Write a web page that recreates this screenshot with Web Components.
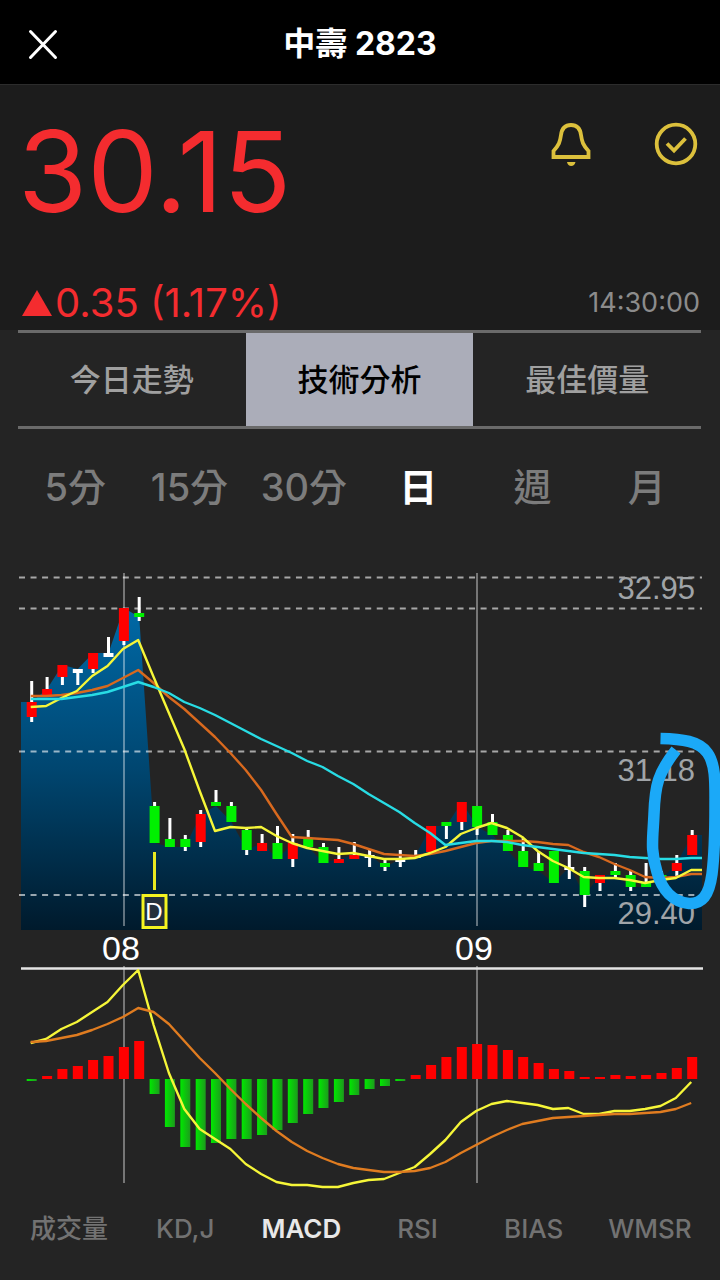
<!DOCTYPE html>
<html lang="zh-Hant">
<head>
<meta charset="utf-8">
<meta name="viewport" content="width=device-width, initial-scale=1">
<title>中壽 2823</title>
<style>
  body {
    margin: 0;
    min-height: 100vh;
    background: #242424;
    color: #fff;
    font-family: Inter, "Noto Sans CJK TC", sans-serif;
  }
</style>
</head>
<body>
<stock-page></stock-page>

<script>
class StockHeader extends HTMLElement {
  constructor() {
    super();
    this.attachShadow({ mode: 'open' });
  }

  connectedCallback() {
    this.shadowRoot.innerHTML = `
      <style>
        :host {
          display: grid;
          grid-template-columns: 88px 1fr 88px;
          align-items: center;
          box-sizing: border-box;
          height: 85px;
          padding-top: 3px;
          background: #000;
          border-bottom: 1px solid #2c2c2c;
        }
        button {
          width: 44px;
          height: 44px;
          margin-left: 21px;
          padding: 0;
          border: 0;
          background: transparent;
          color: #fff;
          cursor: pointer;
        }
        svg { display: block; }
        h1 {
          margin: 0;
          text-align: center;
          font-size: 32px;
          line-height: 40px;
          font-weight: 700;
        }
      </style>
      <button aria-label="關閉">
        <svg width="44" height="44" viewBox="0 0 44 44" fill="none" stroke="currentColor" stroke-width="3" stroke-linecap="round">
          <path d="M9.500 9.500L34.500 35.500M34.500 9.500L9.500 35.500"/>
        </svg>
      </button>
      <h1><slot></slot></h1>
    `;
  }
}
customElements.define('stock-header', StockHeader);

class StockQuote extends HTMLElement {
  constructor() {
    super();
    this.attachShadow({ mode: 'open' });
  }

  connectedCallback() {
    const price = this.getAttribute('price');
    const change = this.getAttribute('change');
    const time = this.getAttribute('time');
    this.shadowRoot.innerHTML = `
      <style>
        :host {
          display: flex;
          flex-direction: column;
          justify-content: space-between;
          box-sizing: border-box;
          height: 245px;
          padding: 24px 20px 3px 18px;
          background: #1c1c1c;
        }
        .row {
          display: flex;
          justify-content: space-between;
        }
        .price {
          color: #f42c2f;
          font-size: 112px;
          line-height: 124px;
          font-weight: 400;
        }
        .actions {
          display: flex;
          gap: 57px;
          padding-top: 11px;
        }
        button {
          width: 48px;
          height: 48px;
          padding: 0;
          border: 0;
          background: transparent;
          color: #dcc03c;
          cursor: pointer;
        }
        svg { display: block; }
        .bottom {
          align-items: center;
          padding-left: 4px;
        }
        .change {
          display: flex;
          align-items: center;
          gap: 3px;
          color: #f42c2f;
          font-size: 40px;
          line-height: 48px;
        }
        time {
          color: #8c8c8c;
          font-size: 27px;
          line-height: 32px;
        }
      </style>
      <div class="row">
        <div class="price">${price}</div>
        <div class="actions">
          <button aria-label="到價提醒">
            <svg width="48" height="48" viewBox="0 0 48 48" fill="none" stroke="currentColor" stroke-width="3.800">
              <path d="M6.500 37V31C12 25 13 22 14 15C15 7 19 5 24 5S33 7 34 15C35 22 36 25 41.500 31V37Z"/>
              <path d="M20 42H28.500Q27.500 46 24.200 46T20 42Z" fill="currentColor" stroke="none"/>
            </svg>
          </button>
          <button aria-label="已加入自選">
            <svg width="48" height="48" viewBox="0 0 48 48" fill="none" stroke="currentColor" stroke-width="3.800">
              <circle cx="24" cy="24" r="19.300"/>
              <path d="M15 23.500L22 30.500L33.500 18.500"/>
            </svg>
          </button>
        </div>
      </div>
      <div class="row bottom">
        <div class="change">
          <svg width="30" height="26" viewBox="0 0 30 26"><path d="M15 0L30 26H0Z" fill="currentColor"/></svg>
          <span>${change}</span>
        </div>
        <time>${time}</time>
      </div>
    `;
  }
}
customElements.define('stock-quote', StockQuote);

// Framed tabs under the quote
class ViewTabs extends HTMLElement {
  constructor() {
    super();
    this.attachShadow({ mode: 'open' });
  }

  connectedCallback() {
    const items = this.getAttribute('items').split('|');
    const active = this.getAttribute('active');
    this.shadowRoot.innerHTML = `
      <style>
        :host {
          display: grid;
          grid-template-columns: repeat(3, 1fr);
          height: 93px;
          margin: 0 19px 0 18px;
          border-top: 3px solid #6a6a6a;
          border-bottom: 3px solid #6a6a6a;
        }
        button {
          padding: 0;
          border: 0;
          background: transparent;
          color: #a0a0a0;
          font: 500 31px/40px Inter, "Noto Sans CJK TC", sans-serif;
          cursor: pointer;
        }
        button[aria-pressed="true"] {
          background: #abadb9;
          color: #000;
        }
      </style>
      ${items.map(t => `<button aria-pressed="${t === active}">${t}</button>`).join('')}
    `;
  }
}
customElements.define('view-tabs', ViewTabs);

// Plain row of choices, used for the period and for the indicator
class ChoiceRow extends HTMLElement {
  constructor() {
    super();
    this.attachShadow({ mode: 'open' });
  }

  connectedCallback() {
    const items = this.getAttribute('items').split('|');
    const active = this.getAttribute('active');
    this.shadowRoot.innerHTML = `
      <style>
        :host {
          display: grid;
          grid-template-columns: repeat(6, 1fr);
          --size: 38px;
          --color: #7c7c7c;
        }
        button {
          padding: 0;
          border: 0;
          background: transparent;
          color: var(--color);
          font-family: Inter, "Noto Sans CJK TC", sans-serif;
          font-size: var(--size);
          font-weight: 500;
          line-height: 48px;
          white-space: nowrap;
          cursor: pointer;
        }
        button[aria-pressed="true"] {
          color: var(--active, #fff);
          font-weight: var(--active-weight, 700);
        }
      </style>
      ${items.map(t => `<button aria-pressed="${t === active}">${t}</button>`).join('')}
    `;
  }
}
customElements.define('choice-row', ChoiceRow);

// Candle: [colour, body top, body bottom, wick top, wick bottom]
const CANDLES = [
  ['r', 702, 717, 681, 722], ['r', 689, 697, 677, 697], ['r', 665, 677, 665, 685], ['w', 669, 673, 669, 685],
  ['r', 653, 669, 653, 673], ['w', 653, 657, 637, 657], ['r', 608, 641, 608, 645], ['g', 613, 617, 597, 621],
  ['g', 806, 843, 802, 843], ['g', 839, 847, 818, 847], ['g', 839, 847, 835, 851], ['r', 814, 842, 810, 847],
  ['g', 802, 806, 790, 806], ['g', 806, 822, 802, 822], ['g', 830, 850, 827, 855], ['r', 843, 851, 834, 851],
  ['g', 843, 859, 826, 859], ['r', 843, 859, 834, 867], ['g', 839, 847, 830, 847], ['g', 847, 863, 843, 863],
  ['r', 859, 863, 847, 863], ['r', 855, 859, 842, 859], ['w', 855, 858, 850, 867], ['g', 863, 867, 859, 871],
  ['w', 859, 862, 850, 867], ['w', 855, 858, 850, 858], ['r', 826, 852, 826, 852], ['g', 822, 826, 822, 839],
  ['r', 802, 822, 802, 830], ['g', 806, 827, 806, 835], ['g', 822, 835, 814, 835], ['g', 835, 851, 830, 851],
  ['g', 851, 867, 838, 867], ['g', 863, 871, 851, 871], ['g', 851, 883, 851, 883], ['w', 867, 870, 855, 879],
  ['g', 871, 895, 867, 907], ['r', 875, 883, 875, 891], ['g', 871, 875, 863, 879], ['g', 875, 887, 871, 891],
  ['g', 883, 887, 863, 887], ['g', 875, 879, 871, 883], ['r', 863, 871, 855, 877], ['r', 835, 855, 830, 855]
];

const MA5 = [707, 706, 698, 691, 676, 666, 649, 640, 677, 713, 749, 791, 831, 827, 828, 827, 836, 843, 848, 851, 854, 853,
  856, 859, 859, 858, 853, 847, 834, 828, 823, 828, 837, 851, 861, 868, 877, 878, 878, 880, 883, 880, 878, 870];
const MA10 = [696, 696, 695, 693, 690, 686, 678, 670, 683, 697, 709, 723, 737, 753, 770, 790, 814, 837, 838, 839, 840, 844,
  849, 854, 855, 856, 854, 851, 847, 843, 841, 841, 841, 842, 844, 845, 852, 857, 864, 870, 877, 878, 877, 874];
const MA20 = [699, 699, 699, 697, 695, 692, 687, 682, 687, 693, 702, 708, 715, 723, 731, 739, 746, 753, 761, 767, 776, 784,
  794, 803, 812, 823, 833, 845, 843, 841, 841, 842, 845, 847, 849, 851, 853, 854, 855, 857, 858, 859, 859, 858];

const OSC = [-2, 3, 10, 13, 19, 23, 32, 38, -15, -48, -68, -71, -64, -60, -60, -56, -51, -44, -35, -29, -23, -16,
  -10, -7, -2, 4, 14, 22, 32, 35, 34, 29, 22, 16, 10, 8, 2, 2, 4, 3, 4, 6, 11, 22];
const DIF = [1043, 1039, 1029, 1022, 1012, 1002, 985, 970, 1025, 1073, 1109, 1129, 1139, 1149, 1164, 1174, 1182, 1185, 1185,
  1187, 1187, 1183, 1180, 1179, 1173, 1167, 1154, 1140, 1122, 1111, 1104, 1101, 1103, 1105, 1109, 1108, 1114, 1114, 1111,
  1111, 1109, 1106, 1098, 1082];
const SIGNAL = [1042, 1041, 1038, 1035, 1030, 1024, 1017, 1008, 1012, 1024, 1041, 1058, 1073, 1089, 1104, 1118, 1131, 1142,
  1151, 1158, 1164, 1168, 1170, 1172, 1172, 1171, 1168, 1162, 1153, 1145, 1137, 1130, 1124, 1121, 1118, 1117, 1116, 1115,
  1114, 1114, 1113, 1112, 1109, 1103];

const FILL = { r: '#ff0000', g: '#00f000', w: '#ffffff' };
const STEP = 15.36;
const BASE = 1079;

class StockChart extends HTMLElement {
  constructor() {
    super();
    this.attachShadow({ mode: 'open' });
  }

  connectedCallback() {
    this.render();
  }

  x(i) {
    return Math.round((31.7 + i * STEP) * 10) / 10;
  }

  line(values, color, tail) {
    const points = values.map((v, i) => `${this.x(i) - 1},${v}`);
    if (tail) points.push(`702,${values[values.length - 1]}`);
    return `<polyline points="${points.join(' ')}" stroke="${color}"/>`;
  }

  candle([c, top, bottom, high, low], i) {
    const x = this.x(i);
    return `<rect x="${x - 1.5}" y="${high}" width="3" height="${low - high}" fill="#fff"/>
      <rect x="${x - 5}" y="${top}" width="10" height="${bottom - top}" fill="${FILL[c]}"/>`;
  }

  bar(v, i) {
    const x = this.x(i) - 5;
    return v > 0
      ? `<rect x="${x}" y="${BASE - v}" width="10" height="${v}" fill="#ff0000"/>`
      : `<rect x="${x}" y="${BASE}" width="10" height="${-v}" fill="url(#down)"/>`;
  }

  render() {
    const closes = CANDLES.map(([c, top, bottom], i) => `L${this.x(i)} ${c === 'g' ? bottom : top}`).join('');
    this.shadowRoot.innerHTML = `
      <style>
        :host { display: block; }
        svg {
          display: block;
          width: 100%;
          height: auto;
        }
        text { font-family: "Liberation Sans", Arial, sans-serif; }
        .scale { fill: #a0a4a8; font-size: 31px; text-anchor: end; }
        .month { fill: #fff; font-size: 34px; text-anchor: middle; }
        .mark { fill: #fff; font-size: 24px; text-anchor: middle; }
      </style>
      <svg viewBox="0 540 720 660" role="img" aria-label="日線與 MACD">
        <defs>
          <linearGradient id="area" gradientUnits="userSpaceOnUse" x1="0" y1="608" x2="0" y2="930">
            <stop offset="0" stop-color="#0069a6"/>
            <stop offset=".5" stop-color="#004670"/>
            <stop offset="1" stop-color="#001a2c"/>
          </linearGradient>
          <linearGradient id="down">
            <stop offset="0" stop-color="#00e800"/>
            <stop offset="1" stop-color="#1c9c1c"/>
          </linearGradient>
        </defs>

        <path d="M21 930V702${closes}H702V930Z" fill="url(#area)"/>
        <g stroke="#fff" stroke-opacity=".6" stroke-width="2" stroke-dasharray="6 5.540">
          <path d="M19 577.500H702M19 608.500H702M19 751.500H702M19 895H702"/>
        </g>
        <g stroke="#fff" stroke-opacity=".5" stroke-width="1.500">
          <path d="M124 573V926M477 573V926M124 966V1183M477 966V1183"/>
        </g>
        <text class="scale" x="695" y="599">32.95</text>
        <text class="scale" x="695" y="781">31.18</text>
        <text class="scale" x="695" y="924">29.40</text>

        <g>${CANDLES.map((c, i) => this.candle(c, i)).join('')}</g>
        <g fill="none" stroke-width="2.400" stroke-linejoin="round">
          ${this.line(MA10, '#d8691e', true)}
          ${this.line(MA5, '#f6f638', true)}
          ${this.line(MA20, '#28dce4', true)}
        </g>

        <path d="M154.500 852V890" stroke="#e8e820" stroke-width="3"/>
        <rect x="143" y="895.500" width="23" height="32" fill="#24303c" stroke="#f4f420" stroke-width="3"/>
        <text class="mark" x="154" y="920">D</text>

        <text class="month" x="121" y="960">08</text>
        <text class="month" x="474" y="960">09</text>
        <path d="M21 968.500H703" stroke="#e4e4e4" stroke-width="2.500"/>

        <g>${OSC.map((v, i) => this.bar(v, i)).join('')}</g>
        <g fill="none" stroke-width="2.400" stroke-linejoin="round">
          ${this.line(DIF, '#f6f638')}
          ${this.line(SIGNAL, '#e07c20')}
        </g>

        <!-- freehand ring round the latest candles -->
        <path d="M660.500 738.500C682 739 699 741 707.500 753C716 765 715 785 715 806C715 830 715 850 712 874C709 896 702 904 689 903.500C673 902 662 890 657 872C650 850 653 838 654 814C655 785 658 773 676 750"
          fill="none" stroke="#1ba9f8" stroke-width="11.500"/>
      </svg>
    `;
  }
}
customElements.define('stock-chart', StockChart);

class StockPage extends HTMLElement {
  constructor() {
    super();
    this.attachShadow({ mode: 'open' });
  }

  connectedCallback() {
    this.shadowRoot.innerHTML = `
      <style>
        :host { display: block; }
        .period { margin: 34px 16px 0 18px; }
        .indicator {
          margin: 5px 12px 0 11px;
          --size: 26px;
          --color: #727272;
          --active: #e8e8e8;
          --active-weight: 600;
        }
        stock-chart { margin-top: 29px; }
      </style>
      <stock-header>中壽 2823</stock-header>
      <stock-quote price="30.15" change="0.35 (1.17%)" time="14:30:00"></stock-quote>
      <view-tabs items="今日走勢|技術分析|最佳價量" active="技術分析"></view-tabs>
      <choice-row class="period" items="5分|15分|30分|日|週|月" active="日"></choice-row>
      <stock-chart></stock-chart>
      <choice-row class="indicator" items="成交量|KD,J|MACD|RSI|BIAS|WMSR" active="MACD"></choice-row>
    `;
  }
}
customElements.define('stock-page', StockPage);
</script>
</body>
</html>
